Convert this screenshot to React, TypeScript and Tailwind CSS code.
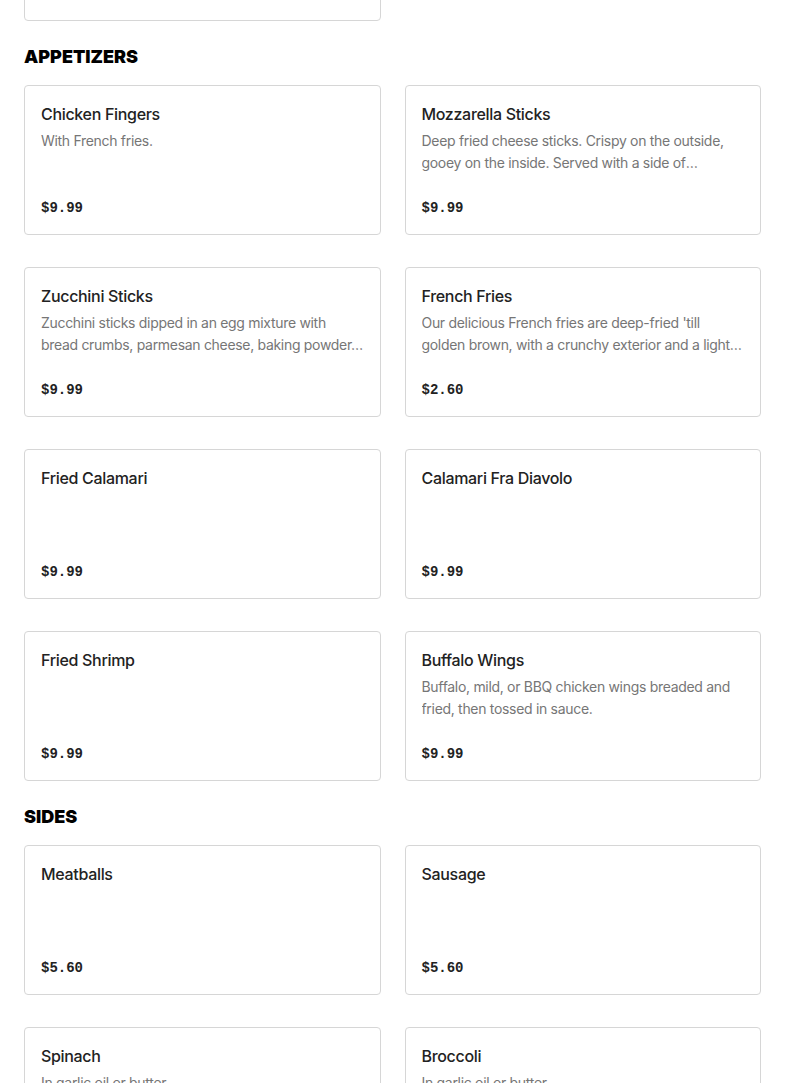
import React from "react";

type Item = { name: string; desc?: string; price: string };

const appetizers: Item[] = [
  { name: "Chicken Fingers", desc: "With French fries.", price: "$9.99" },
  {
    name: "Mozzarella Sticks",
    desc: "Deep fried cheese sticks. Crispy on the outside, gooey on the inside. Served with a side of marinara sauce for dipping.",
    price: "$9.99",
  },
  {
    name: "Zucchini Sticks",
    desc: "Zucchini sticks dipped in an egg mixture with bread crumbs, parmesan cheese, baking powder, and spices, then deep fried.",
    price: "$9.99",
  },
  {
    name: "French Fries",
    desc: "Our delicious French fries are deep-fried 'till golden brown, with a crunchy exterior and a light fluffy interior.",
    price: "$2.60",
  },
  { name: "Fried Calamari", price: "$9.99" },
  { name: "Calamari Fra Diavolo", price: "$9.99" },
  { name: "Fried Shrimp", price: "$9.99" },
  {
    name: "Buffalo Wings",
    desc: "Buffalo, mild, or BBQ chicken wings breaded and fried, then tossed in sauce.",
    price: "$9.99",
  },
];

const sides: Item[] = [
  { name: "Meatballs", price: "$5.60" },
  { name: "Sausage", price: "$5.60" },
  { name: "Spinach", desc: "In garlic oil or butter.", price: "$5.60" },
  { name: "Broccoli", desc: "In garlic oil or butter.", price: "$5.60" },
];

function Card({ item }: { item: Item }) {
  return (
    <div className="h-[150px] flex flex-col border border-[#d6d6d6] rounded-[4px] bg-white px-4 pt-4 pb-[14px]">
      <div
        className="text-[16px] leading-[24px] font-medium text-[#222222] tracking-[-0.02em]"
        style={{ fontFamily: "Inter, 'Noto Sans', sans-serif" }}
      >
        {item.name}
      </div>
      {item.desc && (
        <div
          className="mt-[4px] text-[14px] leading-[22px] text-[#767676] tracking-[-0.022em] line-clamp-2"
          style={{ fontFamily: "Inter, 'Noto Sans', sans-serif" }}
        >
          {item.desc}
        </div>
      )}
      <div
        className="mt-auto text-[14px] leading-[24px] font-bold text-[#222222]"
        style={{ fontFamily: "'Liberation Mono', 'DejaVu Sans Mono', monospace" }}
      >
        {item.price}
      </div>
    </div>
  );
}

function Section({ title, items }: { title: string; items: Item[] }) {
  return (
    <section className="flex flex-col">
      <h2
        className="pt-[1px] h-[28px] text-[18px] leading-[28px] font-black text-black"
        style={{ fontFamily: "Inter, 'Liberation Sans', sans-serif" }}
      >
        {title}
      </h2>
      <div className="mt-[15px] grid grid-cols-2 gap-x-6 gap-y-8">
        {items.map((it) => (
          <Card key={it.name} item={it} />
        ))}
      </div>
    </section>
  );
}

export default function App() {
  return (
    <div className="min-h-screen bg-white px-6 overflow-hidden">
      <div className="flex flex-col gap-[21px]">
        <div className="grid grid-cols-2 gap-x-6 -mt-[129px]">
          <Card item={{ name: "Garlic Bread", price: "$4.99" }} />
        </div>
        <Section title="APPETIZERS" items={appetizers} />
        <Section title="SIDES" items={sides} />
      </div>
    </div>
  );
}
